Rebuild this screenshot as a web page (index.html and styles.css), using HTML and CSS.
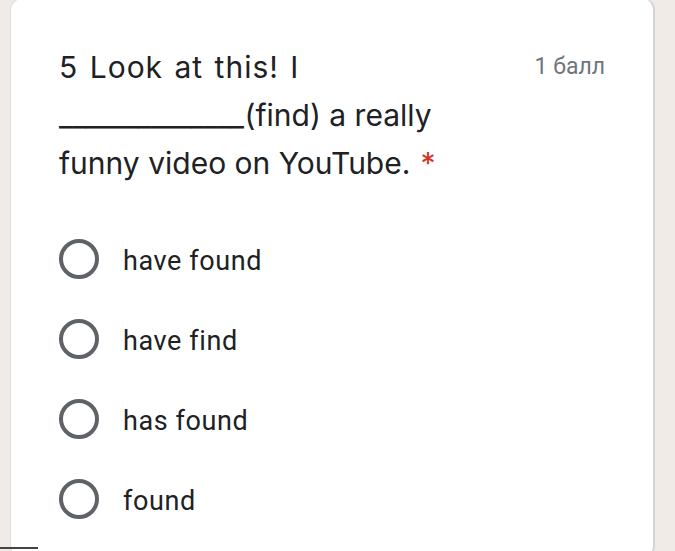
FILE: index.html
```html
<!DOCTYPE html>
<html>
<head>
<meta charset="utf-8">
<link rel="stylesheet" href="styles.css">
</head>
<body>
<div class="page">
  <div class="card">
    <div class="header">
      <div class="title">
        <div class="line wide">5 Look at this! I</div>
        <div class="line"><span class="blank">______________</span><span>(find) a really</span></div>
        <div class="line"><span>funny video on YouTube.</span><span class="req">*</span></div>
      </div>
      <div class="points">1 балл</div>
    </div>
    <div class="options">
      <label class="option"><span class="radio"></span><span class="label">have found</span></label>
      <label class="option"><span class="radio"></span><span class="label">have find</span></label>
      <label class="option"><span class="radio"></span><span class="label">has found</span></label>
      <label class="option"><span class="radio"></span><span class="label">found</span></label>
    </div>
  </div>
  <div class="edge"></div>
</div>
</body>
</html>
```

FILE: styles.css
```css
html, body {
  margin: 0;
  padding: 0;
  background: #f0ebe7;
  height: 100%;
  overflow: hidden;
}
.page {
  position: relative;
  height: 551px;
  padding: 0 20px 0 10px;
}
.card {
  background: #ffffff;
  border: 1px solid #dadce0;
  border-right: 2px solid #d4d4d4;
  border-radius: 12px;
  margin-top: -2px;
  height: 560px;
  padding: 44px 48px 0 48px;
  box-sizing: border-box;
}
.header {
  display: flex;
  justify-content: space-between;
  align-items: flex-start;
}
.title {
  font-family: "Inter", "Roboto", sans-serif;
  font-size: 30px;
  line-height: 48px;
  color: #202124;
}
.line {
  display: flex;
  white-space: nowrap;
}
.wide {
  word-spacing: 2px;
  letter-spacing: 1px;
}
.blank {
  letter-spacing: -0.5px;
  margin-right: 1px;
}
.req {
  color: #d93025;
  margin-left: 10px;
}
.points {
  font-family: "Roboto", sans-serif;
  font-size: 23px;
  line-height: 48px;
  color: #70757a;
}
.options {
  display: flex;
  flex-direction: column;
  margin-top: 32px;
}
.option {
  display: flex;
  align-items: center;
  height: 80px;
}
.radio {
  width: 32px;
  height: 32px;
  border: 4px solid #5f6368;
  border-radius: 50%;
  flex: none;
}
.label {
  font-family: "Roboto", sans-serif;
  font-size: 27px;
  color: #202124;
  margin-left: 24px;
  letter-spacing: 0.6px;
  position: relative;
  top: 2px;
}
.edge {
  position: absolute;
  left: 0;
  bottom: 0;
  width: 38px;
  height: 2px;
  background: #444;
}
```
